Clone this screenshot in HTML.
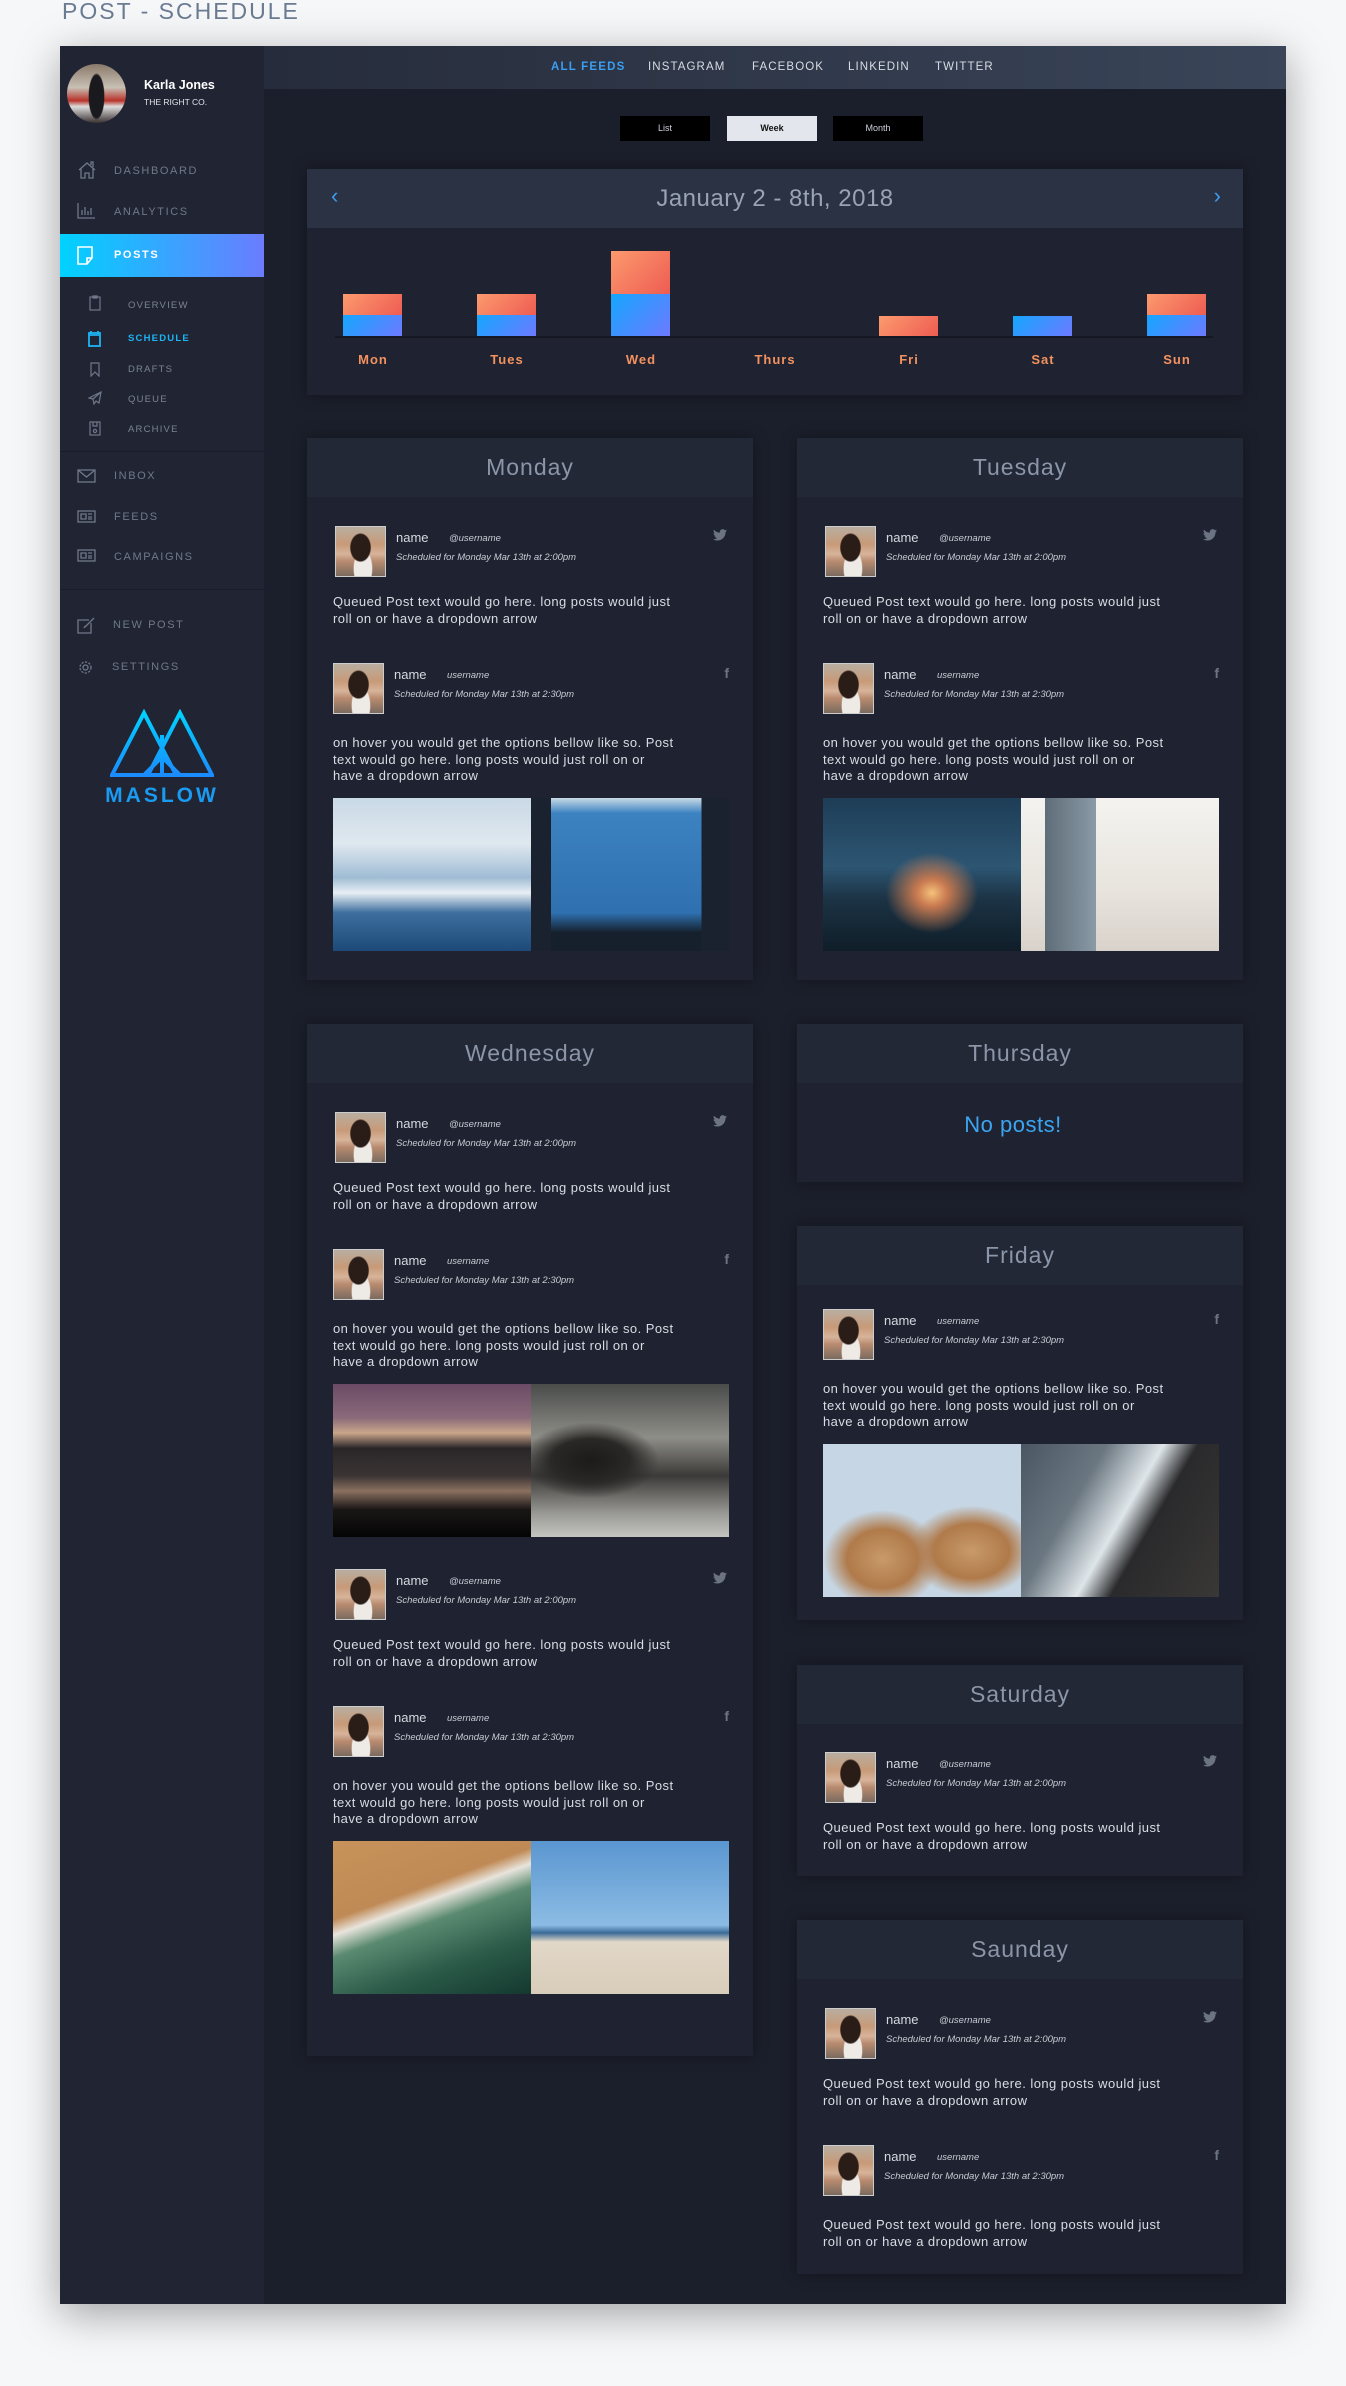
<!DOCTYPE html>
<html><head><meta charset="utf-8">
<style>
*{box-sizing:border-box;margin:0;padding:0}
body{width:1346px;height:2386px;background:#f6f7f9;font-family:"Liberation Sans",sans-serif;position:relative;overflow:hidden}
.title{position:absolute;left:62px;top:-2px;font-size:23px;letter-spacing:2px;color:#6a7b92}
.frame{position:absolute;left:60px;top:46px;width:1226px;height:2258px;background:#1b1f2b;box-shadow:0 10px 40px rgba(0,0,0,.35);overflow:hidden}
.side{position:absolute;left:0;top:0;width:204px;height:100%;background:#212533}
.top{position:absolute;left:204px;top:0;right:0;height:43px;background:linear-gradient(90deg,#262c3b,#3a4559)}
.abs{position:absolute}
.nav{position:absolute;font-size:11px;letter-spacing:1.6px;color:#6f788a}
.sub{position:absolute;font-size:9.5px;letter-spacing:1.2px;color:#7a8394}
.ic{position:absolute}
.tab{position:absolute;top:70px;width:90px;height:25px;background:#000;color:#cfd3da;font-size:9px;text-align:center;line-height:25px}
.card{position:absolute;background:#1f2331;box-shadow:0 0 14px rgba(0,0,0,.35)}
.hd{height:59px;background:#232837;text-align:center;line-height:59px;font-size:23px;letter-spacing:1px;color:#8b96a8}
.post{position:relative;height:137px}
.post.img{height:288px}
.av{position:absolute;left:28px;top:0;width:51px;height:51px;background:radial-gradient(ellipse 22% 30% at 50% 42%,#2a1c17 0 90%,transparent 100%),radial-gradient(ellipse 20% 40% at 55% 85%,#eeeae6 0 90%,transparent 100%),linear-gradient(180deg,#b9aea0 0,#c79a78 35%,#d7b49a 55%,#b98b70 70%,#7a6a5e 100%);border:1px solid #ccc}
.nm{position:absolute;left:89px;top:4px;font-size:13px;color:#d4d8df}
.un{position:absolute;left:142px;top:7px;font-size:9.5px;font-style:italic;color:#c6cbd3}
.sc{position:absolute;left:89px;top:26px;font-size:9.5px;font-style:italic;color:#c6cbd3}
.tx{position:absolute;left:26px;top:68px;font-size:13px;letter-spacing:.45px;line-height:16.5px;color:#d8dce3;white-space:nowrap}
.sn{position:absolute;right:26px;top:2px;color:#6c7484}
.im{position:absolute;left:26px;top:135px;width:396px;height:153px;display:flex}
.im div{flex:1}
</style></head><body>
<div class="title">POST - SCHEDULE</div>
<div class="frame">
 <div class="side">
  <div class="abs" style="left:7px;top:18px;width:59px;height:59px;border-radius:50%;background:radial-gradient(ellipse 14% 40% at 50% 55%,#1a1a1e 0 90%,transparent 100%),linear-gradient(180deg,#8a7a6a 0,#c8c0b4 40%,#b8322a 62%,#ddd 72%,#3a3030 100%)"></div>
  <div class="abs" style="left:84px;top:32px;font-size:12.5px;font-weight:bold;color:#fff">Karla Jones</div>
  <div class="abs" style="left:84px;top:51px;font-size:8.5px;color:#e0e3e8">THE RIGHT CO.</div>
  <svg class="ic" style="left:17px;top:115px" width="20" height="18" viewBox="0 0 20 18" fill="none" stroke="#6f788a" stroke-width="1.3"><path d="M2 9 10 2l8 7M4 7v10h4v-5h4v5h4V7M14 4V1h2v5"/></svg>
  <div class="nav" style="left:54px;top:119px">DASHBOARD</div>
  <svg class="ic" style="left:17px;top:157px" width="18" height="16" viewBox="0 0 18 16" fill="none" stroke="#6f788a" stroke-width="1.3"><path d="M1 0v15h17M5 12V7M8 12V4M11 12V8M14 12V5"/></svg>
  <div class="nav" style="left:54px;top:160px">ANALYTICS</div>
  <div class="abs" style="left:0;top:188px;width:204px;height:43px;background:linear-gradient(90deg,#00d2ff,#6a7cff)"></div>
  <svg class="ic" style="left:17px;top:200px" width="16" height="19" viewBox="0 0 16 19" fill="none" stroke="#fff" stroke-width="1.6"><path d="M1 1h14v11l-5 6H1zM15 12h-5v6"/></svg>
  <div class="nav" style="left:54px;top:203px;color:#fff;font-weight:bold">POSTS</div>
  <svg class="ic" style="left:29px;top:249px" width="12" height="16" viewBox="0 0 12 16" fill="none" stroke="#6f788a" stroke-width="1.2"><rect x="1" y="2" width="10" height="13"/><path d="M4 1h4v2H4z"/></svg>
  <div class="sub" style="left:68px;top:254px">OVERVIEW</div>
  <svg class="ic" style="left:28px;top:284px" width="13" height="17" viewBox="0 0 13 17" fill="none" stroke="#1db4f5" stroke-width="1.8"><rect x="1" y="3" width="11" height="13"/><path d="M3 1v3M10 1v3M1 5h11"/></svg>
  <div class="sub" style="left:68px;top:287px;color:#1db4f5;font-weight:bold">SCHEDULE</div>
  <svg class="ic" style="left:30px;top:316px" width="10" height="15" viewBox="0 0 10 15" fill="none" stroke="#6f788a" stroke-width="1.2"><path d="M1 1h8v13L5 10 1 14z"/></svg>
  <div class="sub" style="left:68px;top:318px">DRAFTS</div>
  <svg class="ic" style="left:28px;top:345px" width="14" height="14" viewBox="0 0 14 14" fill="none" stroke="#6f788a" stroke-width="1.2"><path d="M13 1 1 7l4 1 1 5 2-3 3 2zM5 8l8-7"/></svg>
  <div class="sub" style="left:68px;top:348px">QUEUE</div>
  <svg class="ic" style="left:29px;top:375px" width="12" height="15" viewBox="0 0 12 15" fill="none" stroke="#6f788a" stroke-width="1.2"><rect x="1" y="1" width="10" height="13"/><path d="M4 1v4h4V1"/><circle cx="6" cy="10" r="1.6"/></svg>
  <div class="sub" style="left:68px;top:378px">ARCHIVE</div>
  <div class="abs" style="left:0;top:405px;width:204px;height:1px;background:#1a1d28"></div>
  <svg class="ic" style="left:17px;top:423px" width="19" height="14" viewBox="0 0 19 14" fill="none" stroke="#6f788a" stroke-width="1.3"><rect x="1" y="1" width="17" height="12"/><path d="M1 1l8.5 7L18 1"/></svg>
  <div class="nav" style="left:54px;top:424px">INBOX</div>
  <svg class="ic" style="left:17px;top:464px" width="19" height="13" viewBox="0 0 19 13" fill="none" stroke="#6f788a" stroke-width="1.3"><rect x="1" y="1" width="17" height="11"/><path d="M4 4h5v5H4zM11 4h4M11 7h4M11 9h4"/></svg>
  <div class="nav" style="left:54px;top:465px">FEEDS</div>
  <svg class="ic" style="left:17px;top:503px" width="19" height="13" viewBox="0 0 19 13" fill="none" stroke="#6f788a" stroke-width="1.3"><rect x="1" y="1" width="17" height="11"/><path d="M4 4h5v5H4zM11 4h4M11 7h4M11 9h4"/></svg>
  <div class="nav" style="left:54px;top:505px">CAMPAIGNS</div>
  <div class="abs" style="left:0;top:543px;width:204px;height:1px;background:#1a1d28"></div>
  <svg class="ic" style="left:17px;top:571px" width="18" height="17" viewBox="0 0 18 17" fill="none" stroke="#6f788a" stroke-width="1.3"><path d="M12 3H1v13h13V6M8 10l9-9M7 11l1-2"/></svg>
  <div class="nav" style="left:53px;top:573px">NEW POST</div>
  <svg class="ic" style="left:17px;top:613px" width="17" height="17" viewBox="0 0 17 17" fill="none" stroke="#6f788a" stroke-width="1.3"><circle cx="8.5" cy="8.5" r="5.5" stroke-dasharray="2.2 1.4"/><circle cx="8.5" cy="8.5" r="2.5"/></svg>
  <div class="nav" style="left:52px;top:615px">SETTINGS</div>
  <svg class="ic" style="left:50px;top:663px" width="104" height="70" viewBox="0 0 104 70" fill="none" stroke="url(#g)" stroke-width="4"><defs><linearGradient id="g" x1="0" y1="0" x2="0" y2="1"><stop offset="0" stop-color="#00d2ff"/><stop offset="1" stop-color="#1a8cff"/></linearGradient></defs><path d="M2 66 34 4l32 62zM38 66 70 4l32 62zM52 26v40M34 66l18-18 18 18"/></svg>
  <div class="abs" style="left:0;width:204px;top:738px;text-align:center;font-size:21px;font-weight:bold;letter-spacing:3px;color:#1a9af0">MASLOW</div>
 </div>
 <div class="top"></div>
 <div class="abs" style="left:491px;top:15px;font-size:11.5px;letter-spacing:1.2px;color:#3a9ef2;font-weight:bold">ALL FEEDS</div>
 <div class="abs" style="left:588px;top:15px;font-size:11.5px;letter-spacing:1.1px;color:#d8dce3">INSTAGRAM</div>
 <div class="abs" style="left:692px;top:15px;font-size:11.5px;letter-spacing:1.1px;color:#d8dce3">FACEBOOK</div>
 <div class="abs" style="left:788px;top:15px;font-size:11.5px;letter-spacing:1.1px;color:#d8dce3">LINKEDIN</div>
 <div class="abs" style="left:875px;top:15px;font-size:11.5px;letter-spacing:1.1px;color:#d8dce3">TWITTER</div>
 <div class="tab" style="left:560px">List</div>
 <div class="tab" style="left:667px;background:#e3e6ec;color:#111;font-weight:bold">Week</div>
 <div class="tab" style="left:773px">Month</div>
 <div class="card" style="left:247px;top:123px;width:936px;height:226px">
  <div style="height:59px;background:#2b3243;text-align:center;line-height:59px;font-size:24px;color:#9aa3b3;letter-spacing:.5px">January 2 - 8th, 2018</div>
  <div class="abs" style="left:24px;top:14px;font-size:22px;color:#3a9ef2">&#8249;</div>
  <div class="abs" style="right:22px;top:14px;font-size:22px;color:#3a9ef2">&#8250;</div>
  <div class="abs" style="left:28px;top:167px;width:878px;height:2px;background:#151822"></div>
 </div>
 <div class="abs" style="left:283px;top:248px;width:59px;height:21px;background:linear-gradient(135deg,#fc9a6e,#ee5c52)"></div>
 <div class="abs" style="left:283px;top:269px;width:59px;height:21px;background:linear-gradient(135deg,#14a6ff,#6d7aff)"></div>
 <div class="abs" style="left:417px;top:248px;width:59px;height:21px;background:linear-gradient(135deg,#fc9a6e,#ee5c52)"></div>
 <div class="abs" style="left:417px;top:269px;width:59px;height:21px;background:linear-gradient(135deg,#14a6ff,#6d7aff)"></div>
 <div class="abs" style="left:551px;top:205px;width:59px;height:43px;background:linear-gradient(135deg,#fc9a6e,#ee5c52)"></div>
 <div class="abs" style="left:551px;top:248px;width:59px;height:42px;background:linear-gradient(135deg,#14a6ff,#6d7aff)"></div>
 <div class="abs" style="left:819px;top:270px;width:59px;height:20px;background:linear-gradient(135deg,#fc9a6e,#ee5c52)"></div>
 <div class="abs" style="left:953px;top:270px;width:59px;height:20px;background:linear-gradient(135deg,#14a6ff,#6d7aff)"></div>
 <div class="abs" style="left:1087px;top:248px;width:59px;height:21px;background:linear-gradient(135deg,#fc9a6e,#ee5c52)"></div>
 <div class="abs" style="left:1087px;top:269px;width:59px;height:21px;background:linear-gradient(135deg,#14a6ff,#6d7aff)"></div>
 <div class="abs" style="left:273px;top:306px;width:80px;text-align:center;font-size:13px;letter-spacing:1px;color:#f3915f;font-weight:bold">Mon</div>
 <div class="abs" style="left:407px;top:306px;width:80px;text-align:center;font-size:13px;letter-spacing:1px;color:#f3915f;font-weight:bold">Tues</div>
 <div class="abs" style="left:541px;top:306px;width:80px;text-align:center;font-size:13px;letter-spacing:1px;color:#f3915f;font-weight:bold">Wed</div>
 <div class="abs" style="left:675px;top:306px;width:80px;text-align:center;font-size:13px;letter-spacing:1px;color:#f3915f;font-weight:bold">Thurs</div>
 <div class="abs" style="left:809px;top:306px;width:80px;text-align:center;font-size:13px;letter-spacing:1px;color:#f3915f;font-weight:bold">Fri</div>
 <div class="abs" style="left:943px;top:306px;width:80px;text-align:center;font-size:13px;letter-spacing:1px;color:#f3915f;font-weight:bold">Sat</div>
 <div class="abs" style="left:1077px;top:306px;width:80px;text-align:center;font-size:13px;letter-spacing:1px;color:#f3915f;font-weight:bold">Sun</div>

 <div class="card" style="left:247px;top:392px;width:446px;height:542px">
  <div class="hd">Monday</div>
  <div style="padding-top:29px">
   <div class="post"><div class="av"></div><div class="nm">name</div><div class="un">@username</div><div class="sc">Scheduled for Monday Mar 13th at 2:00pm</div><div class="sn"><svg width="14" height="12" viewBox="0 0 24 20"><path fill="#6c7484" d="M24 2.4a10 10 0 0 1-2.8.8A5 5 0 0 0 23.3.5a10 10 0 0 1-3.1 1.2A4.9 4.9 0 0 0 11.8 6 14 14 0 0 1 1.7.9a4.9 4.9 0 0 0 1.5 6.6 4.9 4.9 0 0 1-2.2-.6 4.9 4.9 0 0 0 3.9 4.8 5 5 0 0 1-2.2.1 4.9 4.9 0 0 0 4.6 3.4A9.9 9.9 0 0 1 0 17.2 14 14 0 0 0 7.5 19.4c9 0 14-7.5 14-14v-.6A10 10 0 0 0 24 2.4z"/></svg></div><div class="tx">Queued Post text would go here. long posts would just<br>roll on or have a dropdown arrow</div></div>
   <div class="post img"><div class="av" style="left:26px"></div><div class="nm" style="left:87px">name</div><div class="un" style="left:140px">username</div><div class="sc" style="left:87px">Scheduled for Monday Mar 13th at 2:30pm</div><div class="sn" style="font-size:14px;font-weight:bold;right:24px">f</div><div class="tx" style="top:72px">on hover you would get the options bellow like so. Post<br>text would go here. long posts would just roll on or<br>have a dropdown arrow</div>
    <div class="im"><div style="background:linear-gradient(180deg,#c9d9e6 0,#dfe8ef 30%,#9fbcd4 52%,#e8eff4 62%,#3d6e9e 75%,#1d4a78 100%)"></div><div style="background:linear-gradient(90deg,#1a2230 0,#1a2230 10%,transparent 10%,transparent 86%,#1a2230 86%),linear-gradient(180deg,#c8dae6 0,#3c82c0 10%,#2f70b0 75%,#15202c 88%)"></div></div></div>
  </div>
 </div>
 <div class="card" style="left:737px;top:392px;width:446px;height:542px">
  <div class="hd">Tuesday</div>
  <div style="padding-top:29px">
   <div class="post"><div class="av"></div><div class="nm">name</div><div class="un">@username</div><div class="sc">Scheduled for Monday Mar 13th at 2:00pm</div><div class="sn"><svg width="14" height="12" viewBox="0 0 24 20"><path fill="#6c7484" d="M24 2.4a10 10 0 0 1-2.8.8A5 5 0 0 0 23.3.5a10 10 0 0 1-3.1 1.2A4.9 4.9 0 0 0 11.8 6 14 14 0 0 1 1.7.9a4.9 4.9 0 0 0 1.5 6.6 4.9 4.9 0 0 1-2.2-.6 4.9 4.9 0 0 0 3.9 4.8 5 5 0 0 1-2.2.1 4.9 4.9 0 0 0 4.6 3.4A9.9 9.9 0 0 1 0 17.2 14 14 0 0 0 7.5 19.4c9 0 14-7.5 14-14v-.6A10 10 0 0 0 24 2.4z"/></svg></div><div class="tx">Queued Post text would go here. long posts would just<br>roll on or have a dropdown arrow</div></div>
   <div class="post img"><div class="av" style="left:26px"></div><div class="nm" style="left:87px">name</div><div class="un" style="left:140px">username</div><div class="sc" style="left:87px">Scheduled for Monday Mar 13th at 2:30pm</div><div class="sn" style="font-size:14px;font-weight:bold;right:24px">f</div><div class="tx" style="top:72px">on hover you would get the options bellow like so. Post<br>text would go here. long posts would just roll on or<br>have a dropdown arrow</div>
    <div class="im"><div style="background:radial-gradient(ellipse at 55% 62%,#f6c07a 0,#c87a50 10%,transparent 30%),linear-gradient(180deg,#1e3d56 0,#2d5673 45%,#1c3446 65%,#0f1d28 100%)"></div><div style="background:linear-gradient(90deg,transparent 0,transparent 12%,#5e6d78 12%,#8a9aa6 38%,transparent 38%),linear-gradient(180deg,#f4f3ef 0,#e8e4de 60%,#d8d2ca 100%)"></div></div></div>
  </div>
 </div>
 <div class="card" style="left:247px;top:978px;width:446px;height:1032px">
  <div class="hd">Wednesday</div>
  <div style="padding-top:29px">
   <div class="post"><div class="av"></div><div class="nm">name</div><div class="un">@username</div><div class="sc">Scheduled for Monday Mar 13th at 2:00pm</div><div class="sn"><svg width="14" height="12" viewBox="0 0 24 20"><path fill="#6c7484" d="M24 2.4a10 10 0 0 1-2.8.8A5 5 0 0 0 23.3.5a10 10 0 0 1-3.1 1.2A4.9 4.9 0 0 0 11.8 6 14 14 0 0 1 1.7.9a4.9 4.9 0 0 0 1.5 6.6 4.9 4.9 0 0 1-2.2-.6 4.9 4.9 0 0 0 3.9 4.8 5 5 0 0 1-2.2.1 4.9 4.9 0 0 0 4.6 3.4A9.9 9.9 0 0 1 0 17.2 14 14 0 0 0 7.5 19.4c9 0 14-7.5 14-14v-.6A10 10 0 0 0 24 2.4z"/></svg></div><div class="tx">Queued Post text would go here. long posts would just<br>roll on or have a dropdown arrow</div></div>
   <div class="post img"><div class="av" style="left:26px"></div><div class="nm" style="left:87px">name</div><div class="un" style="left:140px">username</div><div class="sc" style="left:87px">Scheduled for Monday Mar 13th at 2:30pm</div><div class="sn" style="font-size:14px;font-weight:bold;right:24px">f</div><div class="tx" style="top:72px">on hover you would get the options bellow like so. Post<br>text would go here. long posts would just roll on or<br>have a dropdown arrow</div>
    <div class="im"><div style="background:linear-gradient(180deg,#6b4a66 0,#8a6a7a 22%,#c9a58a 32%,#2a2628 42%,#3a3434 60%,#8a7060 70%,#1a1616 82%,#050505 100%)"></div><div style="background:radial-gradient(ellipse at 30% 50%,#1c1a1a 0,#2a2826 20%,transparent 35%),linear-gradient(180deg,#4a4c4a 0,#8e8e88 35%,#3c3a38 60%,#9a9a96 85%,#c4c4c0 100%)"></div></div></div>
   <div style="height:32px"></div>
   <div class="post"><div class="av"></div><div class="nm">name</div><div class="un">@username</div><div class="sc">Scheduled for Monday Mar 13th at 2:00pm</div><div class="sn"><svg width="14" height="12" viewBox="0 0 24 20"><path fill="#6c7484" d="M24 2.4a10 10 0 0 1-2.8.8A5 5 0 0 0 23.3.5a10 10 0 0 1-3.1 1.2A4.9 4.9 0 0 0 11.8 6 14 14 0 0 1 1.7.9a4.9 4.9 0 0 0 1.5 6.6 4.9 4.9 0 0 1-2.2-.6 4.9 4.9 0 0 0 3.9 4.8 5 5 0 0 1-2.2.1 4.9 4.9 0 0 0 4.6 3.4A9.9 9.9 0 0 1 0 17.2 14 14 0 0 0 7.5 19.4c9 0 14-7.5 14-14v-.6A10 10 0 0 0 24 2.4z"/></svg></div><div class="tx">Queued Post text would go here. long posts would just<br>roll on or have a dropdown arrow</div></div>
   <div class="post img"><div class="av" style="left:26px"></div><div class="nm" style="left:87px">name</div><div class="un" style="left:140px">username</div><div class="sc" style="left:87px">Scheduled for Monday Mar 13th at 2:30pm</div><div class="sn" style="font-size:14px;font-weight:bold;right:24px">f</div><div class="tx" style="top:72px">on hover you would get the options bellow like so. Post<br>text would go here. long posts would just roll on or<br>have a dropdown arrow</div>
    <div class="im"><div style="background:linear-gradient(160deg,#c8925a 0,#c08a56 35%,#e8e4dc 42%,#5a8a70 52%,#2a5a48 75%,#14382e 100%)"></div><div style="background:linear-gradient(180deg,#5a96d0 0,#8cbce4 55%,#3a6a96 60%,#e2d8c8 66%,#d8ccba 100%)"></div></div></div>
  </div>
 </div>
 <div class="card" style="left:737px;top:978px;width:446px;height:158px">
  <div class="hd">Thursday</div>
  <div style="text-align:center;padding-top:29px;padding-right:14px;font-size:22px;letter-spacing:.5px;color:#3aa6f2">No posts!</div>
 </div>
 <div class="card" style="left:737px;top:1180px;width:446px;height:394px">
  <div class="hd">Friday</div>
  <div style="padding-top:24px">
   <div class="post img"><div class="av" style="left:26px"></div><div class="nm" style="left:87px">name</div><div class="un" style="left:140px">username</div><div class="sc" style="left:87px">Scheduled for Monday Mar 13th at 2:30pm</div><div class="sn" style="font-size:14px;font-weight:bold;right:24px">f</div><div class="tx" style="top:72px">on hover you would get the options bellow like so. Post<br>text would go here. long posts would just roll on or<br>have a dropdown arrow</div>
    <div class="im"><div style="background:radial-gradient(ellipse at 30% 75%,#c89a6a 0,#b07a4a 18%,transparent 30%),radial-gradient(ellipse at 75% 70%,#c89a6a 0,#b07a4a 18%,transparent 30%),#c6d6e4"></div><div style="background:linear-gradient(120deg,#4a5662 0,#6a7680 30%,#dfe6ea 50%,#2a2a2c 62%,#3a3836 100%)"></div></div></div>
  </div>
 </div>
 <div class="card" style="left:737px;top:1619px;width:446px;height:211px">
  <div class="hd">Saturday</div>
  <div style="padding-top:28px">
   <div class="post"><div class="av"></div><div class="nm">name</div><div class="un">@username</div><div class="sc">Scheduled for Monday Mar 13th at 2:00pm</div><div class="sn"><svg width="14" height="12" viewBox="0 0 24 20"><path fill="#6c7484" d="M24 2.4a10 10 0 0 1-2.8.8A5 5 0 0 0 23.3.5a10 10 0 0 1-3.1 1.2A4.9 4.9 0 0 0 11.8 6 14 14 0 0 1 1.7.9a4.9 4.9 0 0 0 1.5 6.6 4.9 4.9 0 0 1-2.2-.6 4.9 4.9 0 0 0 3.9 4.8 5 5 0 0 1-2.2.1 4.9 4.9 0 0 0 4.6 3.4A9.9 9.9 0 0 1 0 17.2 14 14 0 0 0 7.5 19.4c9 0 14-7.5 14-14v-.6A10 10 0 0 0 24 2.4z"/></svg></div><div class="tx">Queued Post text would go here. long posts would just<br>roll on or have a dropdown arrow</div></div>
  </div>
 </div>
 <div class="card" style="left:737px;top:1874px;width:446px;height:354px">
  <div class="hd">Saunday</div>
  <div style="padding-top:29px">
   <div class="post"><div class="av"></div><div class="nm">name</div><div class="un">@username</div><div class="sc">Scheduled for Monday Mar 13th at 2:00pm</div><div class="sn"><svg width="14" height="12" viewBox="0 0 24 20"><path fill="#6c7484" d="M24 2.4a10 10 0 0 1-2.8.8A5 5 0 0 0 23.3.5a10 10 0 0 1-3.1 1.2A4.9 4.9 0 0 0 11.8 6 14 14 0 0 1 1.7.9a4.9 4.9 0 0 0 1.5 6.6 4.9 4.9 0 0 1-2.2-.6 4.9 4.9 0 0 0 3.9 4.8 5 5 0 0 1-2.2.1 4.9 4.9 0 0 0 4.6 3.4A9.9 9.9 0 0 1 0 17.2 14 14 0 0 0 7.5 19.4c9 0 14-7.5 14-14v-.6A10 10 0 0 0 24 2.4z"/></svg></div><div class="tx">Queued Post text would go here. long posts would just<br>roll on or have a dropdown arrow</div></div>
   <div class="post"><div class="av" style="left:26px"></div><div class="nm" style="left:87px">name</div><div class="un" style="left:140px">username</div><div class="sc" style="left:87px">Scheduled for Monday Mar 13th at 2:30pm</div><div class="sn" style="font-size:14px;font-weight:bold;right:24px">f</div><div class="tx" style="top:72px">Queued Post text would go here. long posts would just<br>roll on or have a dropdown arrow</div></div>
  </div>
 </div>
</div>
</body></html>
